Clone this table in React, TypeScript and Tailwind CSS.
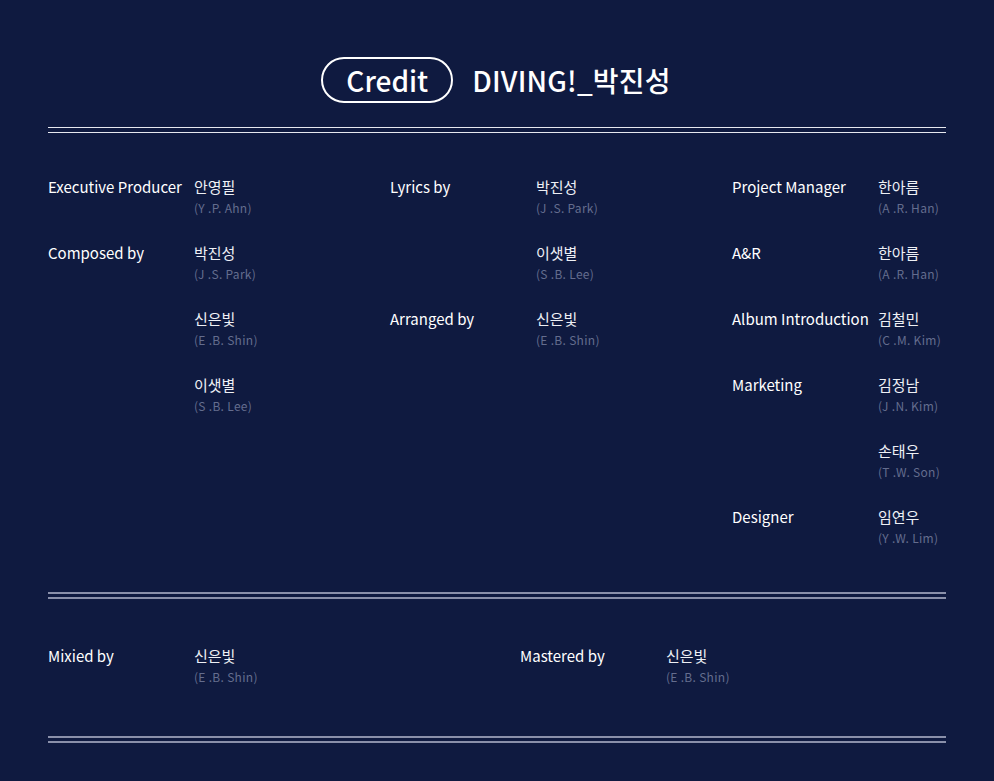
import React from "react";

type Person = { ko: string; en: string };
type Group = { label: string; people: Person[] };

const col1: Group[] = [
  { label: "Executive Producer", people: [{ ko: "안영필", en: "(Y .P. Ahn)" }] },
  {
    label: "Composed by",
    people: [
      { ko: "박진성", en: "(J .S. Park)" },
      { ko: "신은빛", en: "(E .B. Shin)" },
      { ko: "이샛별", en: "(S .B. Lee)" },
    ],
  },
];
const col2: Group[] = [
  {
    label: "Lyrics by",
    people: [
      { ko: "박진성", en: "(J .S. Park)" },
      { ko: "이샛별", en: "(S .B. Lee)" },
    ],
  },
  { label: "Arranged by", people: [{ ko: "신은빛", en: "(E .B. Shin)" }] },
];
const col3: Group[] = [
  { label: "Project Manager", people: [{ ko: "한아름", en: "(A .R. Han)" }] },
  { label: "A&R", people: [{ ko: "한아름", en: "(A .R. Han)" }] },
  { label: "Album Introduction", people: [{ ko: "김철민", en: "(C .M. Kim)" }] },
  {
    label: "Marketing",
    people: [
      { ko: "김정남", en: "(J .N. Kim)" },
      { ko: "손태우", en: "(T .W. Son)" },
    ],
  },
  { label: "Designer", people: [{ ko: "임연우", en: "(Y .W. Lim)" }] },
];

function Entry({ p }: { p: Person }) {
  return (
    <div className="h-[66px]">
      <div className="text-[15px] leading-[20px] text-[#eef0f5]">{p.ko}</div>
      <div className="mt-[3px] text-[12px] leading-[16px] tracking-[0.3px] text-[#646d8e]">{p.en}</div>
    </div>
  );
}

function GroupRow({ g }: { g: Group }) {
  return (
    <div className="flex">
      <div className="w-[146px] shrink-0 text-[15px] leading-[20px] text-white">{g.label}</div>
      <div className="flex flex-col">
        {g.people.map((p, i) => (
          <Entry key={i} p={p} />
        ))}
      </div>
    </div>
  );
}

function Column({ groups }: { groups: Group[] }) {
  return (
    <div className="flex flex-col">
      {groups.map((g, i) => (
        <GroupRow key={i} g={g} />
      ))}
    </div>
  );
}

export default function App() {
  return (
    <div
      className="min-h-[781px] w-full bg-[#0f1a40] px-[48px] pt-[57px]"
      style={{ fontFamily: '"Noto Sans CJK KR", "Noto Sans", sans-serif' }}
    >
      <div className="flex items-center justify-center gap-[19px] pr-[2px]">
        <div className="flex h-[46px] w-[132px] items-center justify-center rounded-full border-2 border-white text-[28px] font-medium leading-none text-white">
          Credit
        </div>
        <div className="text-[28px] font-medium leading-none tracking-[0.2px] text-white">DIVING!_박진성</div>
      </div>

      <div className="mt-[24px] flex flex-col gap-[4px]">
        <div className="h-px bg-[#e6e8ef]" />
        <div className="h-px bg-[#e6e8ef]" />
      </div>

      <div className="mt-[44px] grid grid-cols-[342px_342px_1fr]">
        <Column groups={col1} />
        <Column groups={col2} />
        <Column groups={col3} />
      </div>

      <div className="mt-[19px] flex flex-col gap-[3px]">
        <div className="h-[2px] bg-[#8a90aa]" />
        <div className="h-[2px] bg-[#8a90aa]" />
      </div>

      <div className="mt-[47px] grid grid-cols-[472px_1fr]">
        <GroupRow g={{ label: "Mixied by", people: [{ ko: "신은빛", en: "(E .B. Shin)" }] }} />
        <GroupRow g={{ label: "Mastered by", people: [{ ko: "신은빛", en: "(E .B. Shin)" }] }} />
      </div>

      <div className="mt-[24px] flex flex-col gap-[3px]">
        <div className="h-[2px] bg-[#8a90aa]" />
        <div className="h-[2px] bg-[#8a90aa]" />
      </div>
    </div>
  );
}
